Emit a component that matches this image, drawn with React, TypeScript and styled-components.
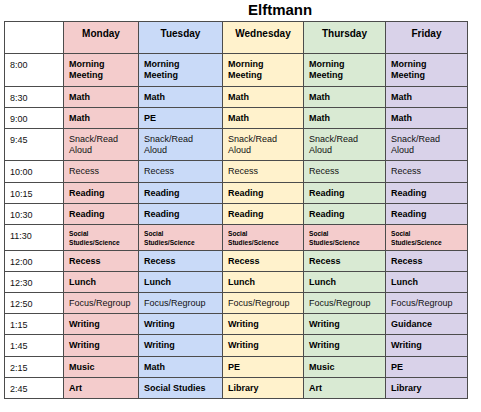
import React from "react";
import styled, { createGlobalStyle } from "styled-components";

const Global = createGlobalStyle`
  html, body { margin: 0; padding: 0; background: #ffffff; }
  body { font-family: "Liberation Sans", Arial, sans-serif; color: #000; }
`;

const Page = styled.div`
  width: 481px;
  height: 412px;
  padding: 1px 0 0 4px;
  box-sizing: border-box;
`;

const Title = styled.h1`
  margin: 0 0 2px 0;
  padding-left: 244px;
  font-size: 15px;
  line-height: 18px;
  font-weight: bold;
  color: #000;
`;

const Grid = styled.div<{ $rows: string }>`
  display: grid;
  width: max-content;
  grid-template-columns: 58px 74px 83px 80px 81px 81px;
  grid-template-rows: ${(p) => p.$rows};
  gap: 1px;
  background: #4c4c4c;
  border: 1px solid #4c4c4c;
`;

const dayColors = ["#f4cccc", "#c9daf8", "#fff2cc", "#d9ead3", "#d9d2e9"];

const HeaderCell = styled.div<{ $bg: string }>`
  background: ${(p) => p.$bg};
  padding-top: 6px;
  text-align: center;
  font-size: 10px;
  line-height: 12px;
  font-weight: bold;
  color: #000;
`;

const TimeCell = styled.div`
  background: #ffffff;
  padding: 6px 0 0 5px;
  font-size: 9px;
  line-height: 11px;
  color: #111;
`;

const Cell = styled.div<{ $bg: string; $bold: boolean; $small: boolean }>`
  background: ${(p) => p.$bg};
  display: flex;
  flex-direction: column;
  justify-content: center;
  padding-left: 5px;
  font-size: ${(p) => (p.$small ? "6.6px" : "9px")};
  line-height: ${(p) => (p.$small ? "9px" : "11px")};
  font-weight: ${(p) => (p.$bold ? "bold" : "normal")};
  color: ${(p) => (p.$bold ? "#000" : "#111")};
  white-space: pre-line;
`;

type Row = {
  time: string;
  h: number;
  items: string[];
  bold: boolean;
  social?: boolean;
};

const days = ["Monday", "Tuesday", "Wednesday", "Thursday", "Friday"];

const rows: Row[] = [
  { time: "8:00", h: 32, items: Array(5).fill("Morning\nMeeting"), bold: true },
  { time: "8:30", h: 20, items: Array(5).fill("Math"), bold: true },
  { time: "9:00", h: 20, items: ["Math", "PE", "Math", "Math", "Math"], bold: true },
  { time: "9:45", h: 31, items: Array(5).fill("Snack/Read\nAloud"), bold: false },
  { time: "10:00", h: 21, items: Array(5).fill("Recess"), bold: false },
  { time: "10:15", h: 20, items: Array(5).fill("Reading"), bold: true },
  { time: "10:30", h: 20, items: Array(5).fill("Reading"), bold: true },
  { time: "11:30", h: 25, items: Array(5).fill("Social\nStudies/Science"), bold: true, social: true },
  { time: "12:00", h: 20, items: Array(5).fill("Recess"), bold: true },
  { time: "12:30", h: 20, items: Array(5).fill("Lunch"), bold: true },
  { time: "12:50", h: 20, items: Array(5).fill("Focus/Regroup"), bold: false },
  { time: "1:15", h: 20, items: ["Writing", "Writing", "Writing", "Writing", "Guidance"], bold: true },
  { time: "1:45", h: 21, items: Array(5).fill("Writing"), bold: true },
  { time: "2:15", h: 20, items: ["Music", "Math", "PE", "Music", "PE"], bold: true },
  { time: "2:45", h: 20, items: ["Art", "Social Studies", "Library", "Art", "Library"], bold: true },
];

export default function App() {
  const template = ["31px", ...rows.map((r) => `${r.h}px`)].join(" ");
  return (
    <Page>
      <Global />
      <Title>Elftmann</Title>
      <Grid $rows={template}>
        <HeaderCell $bg="#ffffff" />
        {days.map((d, i) => (
          <HeaderCell key={d} $bg={dayColors[i]}>
            {d}
          </HeaderCell>
        ))}
        {rows.map((r) => (
          <React.Fragment key={r.time}>
            <TimeCell>{r.time}</TimeCell>
            {r.items.map((t, i) => (
              <Cell
                key={i}
                $bg={r.social ? "#f4cccc" : dayColors[i]}
                $bold={r.bold}
                $small={!!r.social}
              >
                {t}
              </Cell>
            ))}
          </React.Fragment>
        ))}
      </Grid>
    </Page>
  );
}
